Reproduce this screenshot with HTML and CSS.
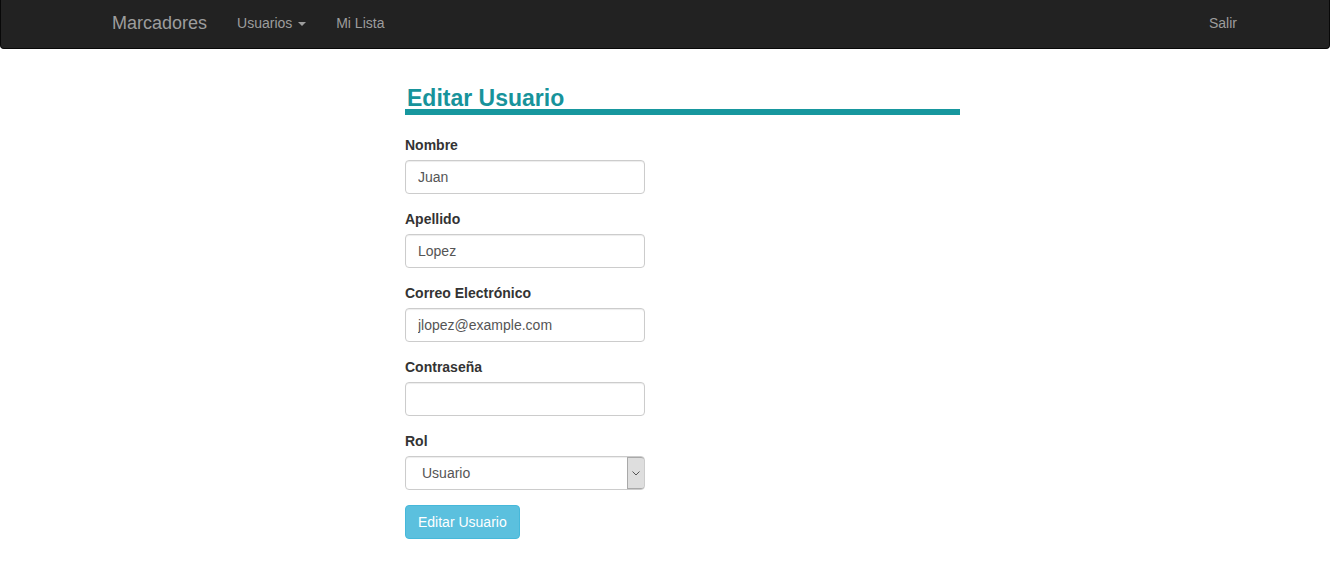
FILE: index.html
```html
<!DOCTYPE html>
<html lang="es">
<head>
<meta charset="utf-8">
<title>Editar Usuario</title>
<link rel="stylesheet" href="styles.css">
</head>
<body>
<nav class="navbar">
  <div class="container nav-inner">
    <a class="brand" href="#">Marcadores</a>
    <ul class="nav">
      <li><a href="#">Usuarios <span class="caret"></span></a></li>
      <li><a href="#">Mi Lista</a></li>
    </ul>
    <ul class="nav nav-right">
      <li><a href="#">Salir</a></li>
    </ul>
  </div>
</nav>
<main class="container">
  <div class="form-wrap">
    <h2 class="title">Editar Usuario</h2>
    <form>
      <div class="form-group">
        <label for="nombre">Nombre</label>
        <input class="form-control" id="nombre" type="text" value="Juan">
      </div>
      <div class="form-group">
        <label for="apellido">Apellido</label>
        <input class="form-control" id="apellido" type="text" value="Lopez">
      </div>
      <div class="form-group">
        <label for="correo">Correo Electrónico</label>
        <input class="form-control" id="correo" type="text" value="jlopez@example.com">
      </div>
      <div class="form-group">
        <label for="pass">Contraseña</label>
        <input class="form-control" id="pass" type="password" value="">
      </div>
      <div class="form-group">
        <label for="rol">Rol</label>
        <div class="select-wrap">
          <select class="form-control select" id="rol">
            <option>Usuario</option>
            <option>Administrador</option>
          </select>
          <span class="select-arrow">
            <svg width="8" height="5" viewBox="0 0 8 5"><path d="M0.5 0.5 L4 4 L7.5 0.5" fill="none" stroke="#555" stroke-width="1"/></svg>
          </span>
        </div>
      </div>
      <button type="button" class="btn">Editar Usuario</button>
    </form>
  </div>
</main>
</body>
</html>
```
FILE: styles.css
```css
* { box-sizing: border-box; }
html, body { margin: 0; padding: 0; }
body {
  font-family: "Liberation Sans", Arial, Helvetica, sans-serif;
  font-size: 14px;
  line-height: 1.42857;
  color: #333;
  background: #fff;
}
.container {
  width: 1170px;
  margin: 0 auto;
  padding: 0 15px;
}
.navbar {
  background: #222;
  border: 1px solid #080808;
  border-top: 0;
  border-radius: 0 0 4px 4px;
  height: 49px;
  margin: 0 2px 0 0;
}
.nav-inner {
  display: flex;
  align-items: center;
  height: 45px;
}
.brand {
  font-size: 18px;
  line-height: 20px;
  color: #9d9d9d;
  text-decoration: none;
  padding: 0 15px;
  margin-left: 2px;
}
.nav {
  list-style: none;
  margin: 0;
  padding: 0;
  display: flex;
}
.nav a {
  display: block;
  padding: 0 15px;
  line-height: 20px;
  color: #9d9d9d;
  text-decoration: none;
}
.nav-right {
  margin-left: auto;
  margin-right: -17px;
}
.caret {
  display: inline-block;
  width: 0;
  height: 0;
  margin-left: 2px;
  vertical-align: middle;
  border-top: 4px solid #9d9d9d;
  border-left: 4px solid transparent;
  border-right: 4px solid transparent;
}
.form-wrap {
  margin-left: 309px;
  width: 555px;
  padding-top: 38px;
}
.title {
  margin: 0 0 20px;
  padding-left: 2px;
  font-size: 23px;
  line-height: 22px;
  font-weight: bold;
  color: #17939b;
  border-bottom: 6px solid #17979e;
}
.form-group { margin-bottom: 15px; }
label {
  display: block;
  font-weight: bold;
  margin-bottom: 5px;
  padding-top: 1px;
  line-height: 19px;
}
.form-control {
  display: block;
  width: 240px;
  height: 34px;
  padding: 6px 12px;
  font-family: inherit;
  font-size: 14px;
  color: #555;
  background: #fff;
  border: 1px solid #ccc;
  border-radius: 4px;
  box-shadow: inset 0 1px 1px rgba(0,0,0,.075);
}
.select-wrap {
  position: relative;
  width: 240px;
}
.select {
  appearance: none;
  -webkit-appearance: none;
  padding-left: 16px;
}
.select-arrow {
  position: absolute;
  top: 1px;
  right: 1px;
  width: 17px;
  height: 32px;
  background: #dedede;
  border: 1px solid #a9a9a9;
  border-right: 0;
  border-radius: 0 3px 3px 0;
  display: flex;
  align-items: center;
  justify-content: center;
}
.btn {
  display: inline-block;
  height: 34px;
  padding: 6px 12px;
  font-family: inherit;
  font-size: 14px;
  line-height: 20px;
  color: #fff;
  background: #5bc0de;
  border: 1px solid #46b8da;
  border-radius: 4px;
}
```
